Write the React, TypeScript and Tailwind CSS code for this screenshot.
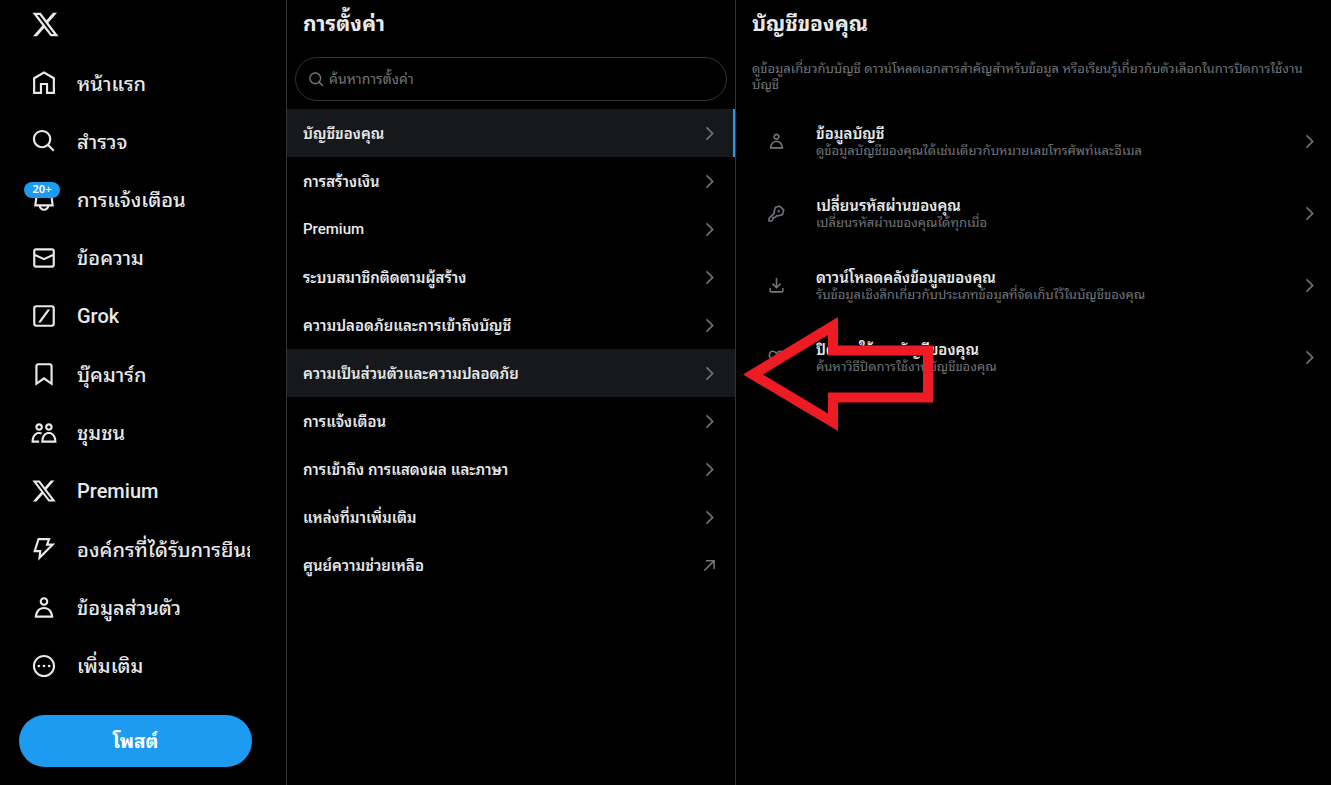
import React from 'react';

const PATHS = {
  x: 'M18.244 2.25h3.308l-7.227 8.26 8.502 11.24H16.17l-5.214-6.817L4.99 21.75H1.68l7.73-8.835L1.254 2.25H8.08l4.713 6.231zm-1.161 17.52h1.833L7.084 4.126H5.117z',
  home: 'M12 1.1L1.9 7V22.1H10.2V13.9H13.8V22.1H22.1V7L12 1.1zM20.1 20.1H15.8V11.9H8.2V20.1H3.9V8.2L12 3.4l8.1 4.8V20.1z',
  search:
    'M10.25 3.75c-3.59 0-6.5 2.91-6.5 6.5s2.91 6.5 6.5 6.5c1.795 0 3.419-.726 4.596-1.904 1.178-1.177 1.904-2.801 1.904-4.596 0-3.59-2.91-6.5-6.5-6.5zm-8.5 6.5c0-4.694 3.806-8.5 8.5-8.5s8.5 3.806 8.5 8.5c0 1.986-.682 3.815-1.824 5.262l4.781 4.781-1.414 1.414-4.781-4.781c-1.447 1.142-3.276 1.824-5.262 1.824-4.694 0-8.5-3.806-8.5-8.5z',
  bell: 'M19.993 9.042C19.48 5.017 16.054 2 11.996 2s-7.49 3.021-7.999 7.051L2.866 18H7.1c.463 2.282 2.481 4 4.9 4s4.437-1.718 4.9-4h4.236l-1.143-8.958zM12 20c-1.306 0-2.417-.835-2.829-2h5.658c-.412 1.165-1.523 2-2.829 2zm-6.866-4l.847-6.698C6.364 6.272 8.941 4 11.996 4s5.627 2.268 6.013 5.295L18.864 16H5.134z',
  mail: 'M1.998 5.5c0-1.381 1.119-2.5 2.5-2.5h15c1.381 0 2.5 1.119 2.5 2.5v13c0 1.381-1.119 2.5-2.5 2.5h-15c-1.381 0-2.5-1.119-2.5-2.5v-13zm2.5-.5c-.276 0-.5.224-.5.5v2.764l8 3.638 8-3.636V5.5c0-.276-.224-.5-.5-.5h-15zm15.5 5.463l-8 3.636-8-3.638V18.5c0 .276.224.5.5.5h15c.276 0 .5-.224.5-.5v-8.037z',
  grok: 'M5 2A3 3 0 0 0 2 5v14a3 3 0 0 0 3 3h14a3 3 0 0 0 3-3V5a3 3 0 0 0-3-3zM4 5a1 1 0 0 1 1-1h14a1 1 0 0 1 1 1v14a1 1 0 0 1-1 1H5a1 1 0 0 1-1-1zM15.2 6h2.5L9 18H6.5z',
  bookmark:
    'M4 4.5C4 3.12 5.119 2 6.5 2h11C18.881 2 20 3.12 20 4.5v18.44l-8-5.71-8 5.71V4.5zM6.5 4c-.276 0-.5.22-.5.5v14.56l6-4.29 6 4.29V4.5c0-.28-.224-.5-.5-.5h-11z',
  people:
    'M7.501 19.917L7.471 21H.472l.029-1.027c.184-6.618 3.736-8.977 7-8.977.963 0 1.95.212 2.87.672-.444.478-.851 1.03-1.212 1.656-.507-.204-1.054-.329-1.658-.329-2.767 0-4.57 2.223-4.938 6.004H7.56c-.023.302-.05.599-.059.917zm15.998.056L23.528 21H9.472l.029-1.027c.184-6.618 3.736-8.977 7-8.977s6.816 2.358 7 8.977zM21.437 19c-.367-3.781-2.17-6.004-4.938-6.004s-4.57 2.223-4.938 6.004h9.875zm-4.938-9c-.799 0-1.527-.279-2.116-.73-.836-.64-1.384-1.638-1.384-2.77 0-1.93 1.567-3.5 3.5-3.5s3.5 1.57 3.5 3.5c0 1.132-.548 2.13-1.384 2.77-.589.451-1.317.73-2.116.73zm-1.5-3.5c0 .827.673 1.5 1.5 1.5s1.5-.673 1.5-1.5-.673-1.5-1.5-1.5-1.5.673-1.5 1.5zM7.5 3C9.433 3 11 4.57 11 6.5S9.433 10 7.5 10 4 8.43 4 6.5 5.567 3 7.5 3zm0 2C6.673 5 6 5.673 6 6.5S6.673 8 7.5 8 9 7.327 9 6.5 8.327 5 7.5 5z',
  bolt: 'M6.2 1.9h11.9L16.2 7h6.2L6.6 22.9 7.4 15H2.1zM7.6 3.9 4.8 13h4.8l-.5 4.4L17.6 9h-4.2l1.9-5.1z',
  person:
    'M5.651 19h12.698c-.337-1.8-1.023-3.21-1.945-4.19C15.318 13.65 13.838 13 12 13s-3.317.65-4.404 1.81c-.922.98-1.608 2.39-1.945 4.19zm.486-5.56C7.627 11.85 9.648 11 12 11s4.373.85 5.863 2.44c1.477 1.58 2.366 3.8 2.632 6.46l.11 1.1H3.395l.11-1.1c.266-2.66 1.155-4.88 2.632-6.46zM12 4c-1.105 0-2 .9-2 2s.895 2 2 2 2-.9 2-2-.895-2-2-2zM8 6c0-2.21 1.791-4 4-4s4 1.79 4 4-1.791 4-4 4-4-1.79-4-4z',
  more: 'M3.75 12c0-4.56 3.69-8.25 8.25-8.25s8.25 3.69 8.25 8.25-3.69 8.25-8.25 8.25S3.75 16.56 3.75 12zM12 1.75C6.34 1.75 1.75 6.34 1.75 12S6.34 22.25 12 22.25 22.25 17.66 22.25 12 17.66 1.75 12 1.75zM6 12a1.25 1.25 0 1 0 2.5 0A1.25 1.25 0 1 0 6 12zM10.75 12a1.25 1.25 0 1 0 2.5 0 1.25 1.25 0 1 0-2.5 0zM15.5 12a1.25 1.25 0 1 0 2.5 0 1.25 1.25 0 1 0-2.5 0z',
  chevron: 'M14.586 12L7.543 4.96l1.414-1.42L17.414 12l-8.457 8.46-1.414-1.42L14.586 12z',
  external: 'M7.5 5h11.3v11.5h-2V8.4L6.2 19l-1.4-1.4L15.4 7H7.5z',
  key: 'M22.3 7.3 20.4 14.2 13.6 16.2 12.6 15.9 10.5 18H8.5V20L6.3 22.4H1.6V17.7L8.2 11.2 7.8 10 9.8 3.6 16.3 1.7zM20.1 7.9 15.7 3.9 11.4 5.2 10 10 10.5 11.7 3.6 18.6V20.4H5.4L6.5 19.2V16H9.7L12 13.6 13.6 14.1 18.7 12.7zM13.2 9a1.5 1.5 0 1 0 3 0 1.5 1.5 0 1 0-3 0z',
  download:
    'M11.99 16l-5.7-5.7L7.7 8.88l3.29 3.3V2.59h2v9.59l3.3-3.3 1.41 1.42-5.71 5.7zM21 15l-.02 3.51c0 1.38-1.12 2.49-2.5 2.49H5.5C4.11 21 3 19.88 3 18.5V15h2v3.5c0 .28.22.5.5.5h12.98c.28 0 .5-.22.5-.5L19 15h2z',
  heart:
    'M12 21C6 17 2 13 2 8.5 2 5.4 4.3 3 7.2 3c2 0 3.7 1 4.8 2.6C13.1 4 14.8 3 16.8 3 19.7 3 22 5.4 22 8.5c0 4.5-4 8.5-10 12.5zm0-2.4c5.1-3.6 8-6.8 8-10.1C20 6.5 18.6 5 16.8 5c-1.8 0-3 1.1-3.800 2.800h-2C10.200 6.100 9 5 7.200 5 5.400 5 4 6.500 4 8.500c0 3.300 2.900 6.500 8 10.100z',
};

type IconName = keyof typeof PATHS;

const Icon: React.FC<{ name: IconName; className: string }> = ({ name, className }) => (
  <svg viewBox="0 0 24 24" aria-hidden="true" fill="currentColor" fillRule="evenodd" className={`shrink-0 ${className}`}>
    <path d={PATHS[name]} />
  </svg>
);

const NAV: { icon: IconName; label: string; latin?: boolean; badge?: string }[] = [
  { icon: 'home', label: 'หน้าแรก' },
  { icon: 'search', label: 'สำรวจ' },
  { icon: 'bell', label: 'การแจ้งเตือน', badge: '20+' },
  { icon: 'mail', label: 'ข้อความ' },
  { icon: 'grok', label: 'Grok', latin: true },
  { icon: 'bookmark', label: 'บุ๊คมาร์ก' },
  { icon: 'people', label: 'ชุมชน' },
  { icon: 'x', label: 'Premium', latin: true },
  { icon: 'bolt', label: 'องค์กรที่ได้รับการยืนยัน' },
  { icon: 'person', label: 'ข้อมูลส่วนตัว' },
  { icon: 'more', label: 'เพิ่มเติม' },
];

const SETTINGS: { label: string; latin?: boolean; active?: boolean; hovered?: boolean; external?: boolean }[] = [
  { label: 'บัญชีของคุณ', active: true },
  { label: 'การสร้างเงิน' },
  { label: 'Premium', latin: true },
  { label: 'ระบบสมาชิกติดตามผู้สร้าง' },
  { label: 'ความปลอดภัยและการเข้าถึงบัญชี' },
  { label: 'ความเป็นส่วนตัวและความปลอดภัย', hovered: true },
  { label: 'การแจ้งเตือน' },
  { label: 'การเข้าถึง การแสดงผล และภาษา' },
  { label: 'แหล่งที่มาเพิ่มเติม' },
  { label: 'ศูนย์ความช่วยเหลือ', external: true },
];

const ACCOUNT: { icon: IconName; title: string; text: string }[] = [
  { icon: 'person', title: 'ข้อมูลบัญชี', text: 'ดูข้อมูลบัญชีของคุณได้เช่นเดียวกับหมายเลขโทรศัพท์และอีเมล' },
  { icon: 'key', title: 'เปลี่ยนรหัสผ่านของคุณ', text: 'เปลี่ยนรหัสผ่านของคุณได้ทุกเมื่อ' },
  { icon: 'download', title: 'ดาวน์โหลดคลังข้อมูลของคุณ', text: 'รับข้อมูลเชิงลึกเกี่ยวกับประเภทข้อมูลที่จัดเก็บไว้ในบัญชีของคุณ' },
  { icon: 'heart', title: 'ปิดการใช้งานบัญชีของคุณ', text: 'ค้นหาวิธีปิดการใช้งานบัญชีของคุณ' },
];

const Sidebar = () => (
  <header className="flex w-[287px] shrink-0 flex-col border-r border-[#2f3336] pl-[19px] pr-[34px]">
    <a href="#home" aria-label="X" className="flex h-[54px] items-center pl-3 pb-1.5">
      <Icon name="x" className="size-[29px]" />
    </a>
    <nav className="flex flex-1 flex-col">
      {NAV.map(({ icon, label, latin, badge }) => (
        <a key={label} href={`#${icon}`} className="flex flex-1 items-center gap-5 pl-3 pr-0.5 text-xl">
          <span className="relative shrink-0">
            <Icon name={icon} className="size-[26px]" />
            {badge && (
              <span className="absolute -left-[7px] -top-[5px] flex h-4 w-9 items-center justify-center rounded-full bg-[#1d9bf0] pb-px text-[11px] font-semibold text-white">
                {badge}
              </span>
            )}
          </span>
          <span
            className={`min-w-0 overflow-hidden whitespace-nowrap leading-10 font-medium ${latin ? 'font-[Roboto,sans-serif]' : 'pb-[3px]'}`}
          >
            {label}
          </span>
        </a>
      ))}
    </nav>
    <button className="mt-5 mb-[18px] h-[52px] rounded-full bg-[#1d9bf0] pb-0.5 text-[19px] font-bold text-white">โพสต์</button>
  </header>
);

const SettingsList = () => (
  <section className="w-[449px] shrink-0 border-r border-[#2f3336]">
    <h1 className="px-4 pt-2 text-[21px] leading-7 font-bold">การตั้งค่า</h1>
    <label className="mx-2 mt-[21px] mb-2 flex h-11 items-center gap-1 rounded-full border border-[#2f3336] px-3 text-[#71767b]">
      <Icon name="search" className="size-[17px]" />
      <input
        type="text"
        aria-label="ค้นหาการตั้งค่า"
        placeholder="ค้นหาการตั้งค่า"
        className="w-full bg-transparent pb-0.5 text-sm outline-none placeholder:text-[#71767b]"
      />
    </label>
    <nav>
      {SETTINGS.map(({ label, latin, active, hovered, external }) => (
        <a
          key={label}
          href={`#${label}`}
          className={`flex h-12 items-center justify-between pl-4 text-[15px] ${
            active ? 'border-r-2 border-[#1d9bf0] pr-3.5' : 'pr-4'
          } ${active || hovered ? 'bg-[#16181c]' : ''}`}
        >
          <span className={latin ? 'font-[Roboto,sans-serif] font-medium' : 'pb-0.5 font-semibold'}>{label}</span>
          <Icon name={external ? 'external' : 'chevron'} className="size-[19px] text-[#71767b]" />
        </a>
      ))}
    </nav>
  </section>
);

const AccountPanel = () => (
  <section className="relative min-w-0 flex-1">
    <h2 className="px-4 pt-2 text-[21px] leading-7 font-bold">บัญชีของคุณ</h2>
    <p className="pt-6 pr-6 pl-4 text-[13px] leading-4 text-[#71767b]">
      ดูข้อมูลเกี่ยวกับบัญชี ดาวน์โหลดเอกสารสำคัญสำหรับข้อมูล หรือเรียนรู้เกี่ยวกับตัวเลือกในการปิดการใช้งานบัญชี
    </p>
    <nav className="mt-[13px]">
      {ACCOUNT.map(({ icon, title, text }) => (
        <a key={title} href={`#${icon}`} className="flex h-[72px] items-center pr-3">
          <span className="flex w-20 shrink-0 justify-center">
            <Icon name={icon} className="size-[19px] text-[#71767b]" />
          </span>
          <span className="min-w-0 flex-1 pb-[3px]">
            <span className="block text-[15px] leading-5 font-semibold">{title}</span>
            <span className="block text-[13px] leading-4 text-[#71767b]">{text}</span>
          </span>
          <Icon name="chevron" className="size-[19px] text-[#71767b]" />
        </a>
      ))}
    </nav>
    <svg viewBox="0 0 190 114" aria-hidden="true" className="absolute left-[7px] top-[317px] h-[114px] w-[190px]">
      <path
        fill="#ed1c24"
        fillRule="evenodd"
        d="M0 57.5 95 0V28.5H190V85.5H95V114zM20 57.5 85 96.5V75.5H180V38.5H85V18z"
      />
    </svg>
  </section>
);

const App = () => (
  <main className="flex min-h-screen bg-black font-['Noto_Sans_Thai_Looped','Noto_Sans','Noto_Sans_Thai',sans-serif] text-[#e7e9ea]">
    <Sidebar />
    <SettingsList />
    <AccountPanel />
  </main>
);

export default App;
